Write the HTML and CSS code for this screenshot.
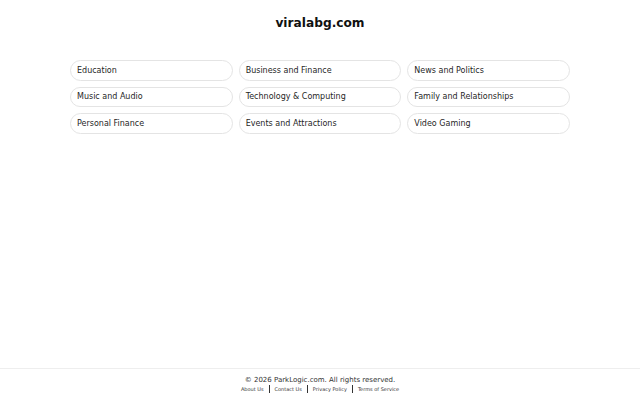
FILE: index.html
```
<!DOCTYPE html>
<html>
<head>
<meta charset="utf-8">
<link rel="stylesheet" href="styles.css">
</head>
<body>
<div class="page">
  <main class="main">
    <h1 class="title">viralabg.com</h1>
    <div class="grid">
      <a class="pill">Education</a>
      <a class="pill">Business and Finance</a>
      <a class="pill">News and Politics</a>
      <a class="pill">Music and Audio</a>
      <a class="pill">Technology &amp; Computing</a>
      <a class="pill">Family and Relationships</a>
      <a class="pill">Personal Finance</a>
      <a class="pill">Events and Attractions</a>
      <a class="pill">Video Gaming</a>
    </div>
  </main>
  <footer class="footer">
    <div class="copy">© 2026 ParkLogic.com. All rights reserved.</div>
    <div class="links">
      <a class="link">About Us</a><span class="sep"></span><a class="link">Contact Us</a><span class="sep"></span><a class="link">Privacy Policy</a><span class="sep"></span><a class="link">Terms of Service</a>
    </div>
  </footer>
</div>
</body>
</html>
```
FILE: styles.css
```
html, body {
  margin: 0;
  padding: 0;
  background: #ffffff;
}
body {
  font-family: "DejaVu Sans", sans-serif;
  color: #222222;
}
.page {
  display: flex;
  flex-direction: column;
  min-height: 100vh;
}
.main {
  flex: 1;
  display: flex;
  flex-direction: column;
  align-items: center;
}
.title {
  margin: 15px 0 0 0;
  font-size: 12.2px;
  line-height: 16px;
  font-weight: bold;
  color: #111111;
}
.grid {
  margin-top: 29px;
  width: 500px;
  display: grid;
  grid-template-columns: repeat(3, 1fr);
  column-gap: 6px;
  row-gap: 6px;
}
.pill {
  display: flex;
  align-items: center;
  height: 18.5px;
  padding: 0 6px;
  border: 1px solid #e4e4e4;
  border-radius: 11px;
  font-size: 8px;
  color: #1f1f1f;
}
.footer {
  border-top: 1px solid #eeeeee;
  height: 32px;
  display: flex;
  flex-direction: column;
  align-items: center;
  padding-top: 7px;
  box-sizing: border-box;
}
.copy {
  font-size: 7px;
  line-height: 9px;
  color: #333333;
}
.links {
  display: flex;
  align-items: center;
  margin-top: 0;
}
.link {
  font-size: 5px;
  line-height: 8px;
  color: #333333;
}
.sep {
  width: 1px;
  height: 8px;
  background: #333333;
  margin: 0 5px;
}
```
